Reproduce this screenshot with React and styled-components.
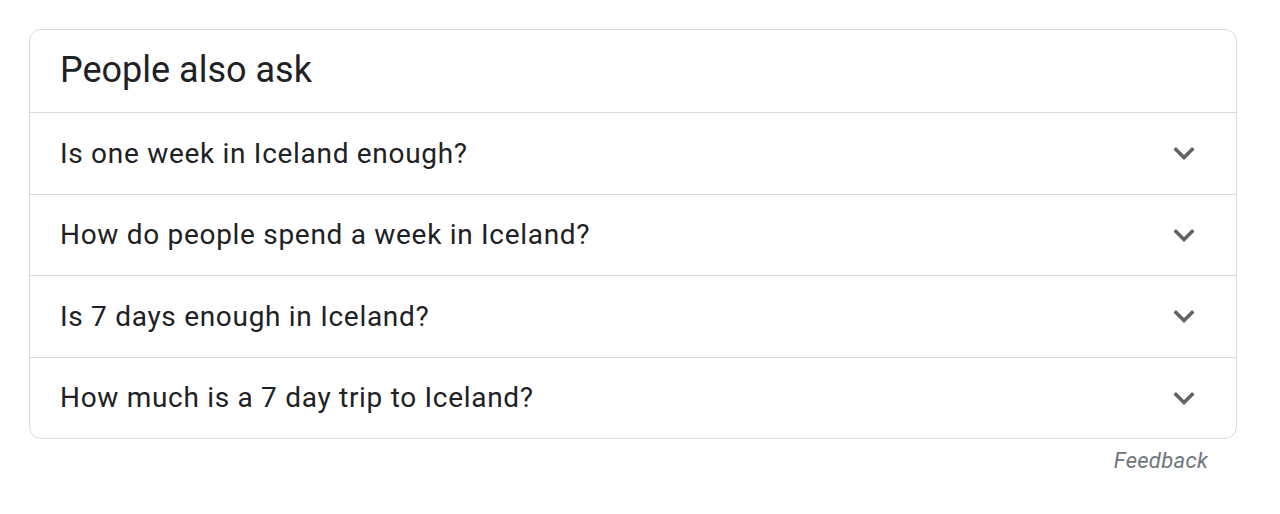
import styled, { createGlobalStyle } from 'styled-components';

const GlobalStyle = createGlobalStyle`
  body {
    margin: 0;
    background: #fff;
    font-family: Roboto, "Liberation Sans", sans-serif;
  }
`;

const Page = styled.div`
  padding: 29px 43px 0 29px;
`;

const Card = styled.div`
  border: 1px solid #dadce0;
  border-radius: 12px;
  overflow: hidden;
`;

const Title = styled.div`
  height: 82px;
  padding: 0 30px 3px;
  display: flex;
  align-items: center;
  box-sizing: border-box;
  font-size: 36px;
  color: #202124;
`;

const Row = styled.div`
  height: 81.5px;
  box-sizing: border-box;
  border-top: 1px solid #dadce0;
  display: flex;
  align-items: center;
  justify-content: space-between;
  padding: 0 31px 0 30px;
  font-size: 28px;
  letter-spacing: 0.7px;
  color: #202124;
`;

const Chevron = styled.svg`
  width: 42px;
  height: 42px;
  fill: #5f6368;
`;

const Footer = styled.div`
  display: flex;
  justify-content: flex-end;
  padding: 9px 29px 0 0;
`;

const Feedback = styled.span`
  font-style: italic;
  font-size: 22px;
  letter-spacing: 0.3px;
  color: #70757a;
`;

const questions = [
  'Is one week in Iceland enough?',
  'How do people spend a week in Iceland?',
  'Is 7 days enough in Iceland?',
  'How much is a 7 day trip to Iceland?',
];

export default function App() {
  return (
    <Page>
      <GlobalStyle />
      <Card>
        <Title>People also ask</Title>
        {questions.map((q) => (
          <Row key={q}>
            <span>{q}</span>
            <Chevron viewBox="0 0 24 24">
              <path d="M16.59 8.59 12 13.17 7.41 8.59 6 10l6 6 6-6z" />
            </Chevron>
          </Row>
        ))}
      </Card>
      <Footer>
        <Feedback>Feedback</Feedback>
      </Footer>
    </Page>
  );
}
